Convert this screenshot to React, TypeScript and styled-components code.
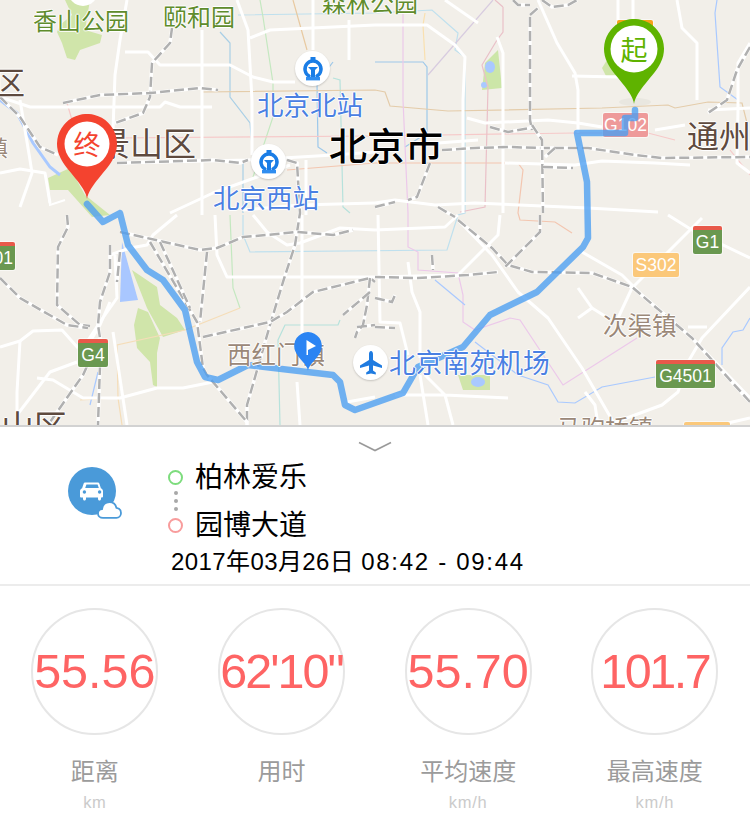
import React from "react";
import styled, { createGlobalStyle } from "styled-components";

const CJK = `"Liberation Sans", "Noto Sans CJK SC", sans-serif`;

const Global = createGlobalStyle`
  html, body { margin: 0; padding: 0; background: #fff; }
  body { width: 750px; height: 825px; overflow: hidden; font-family: ${CJK}; }
`;

const Page = styled.div`
  width: 750px;
  height: 825px;
  display: flex;
  flex-direction: column;
  overflow: hidden;
  background: #fff;
`;

const MapArea = styled.div`
  position: relative;
  width: 750px;
  height: 425px;
  flex: none;
  overflow: hidden;
  background: #f2efe9;
`;

const MapLayer = styled.svg`
  position: absolute;
  left: 0;
  top: 0;
  width: 750px;
  height: 425px;
`;

const kinds = {
  park: { color: "#5f8c2c" },
  district: { color: "#5e4a3e" },
  town: { color: "#9b8878" },
  transit: { color: "#4a80e2" },
  city: { color: "#000" },
} as const;

const Label = styled.span<{ $x: number; $y: number; $size: number; $kind: keyof typeof kinds }>`
  position: absolute;
  left: ${(p) => p.$x}px;
  top: ${(p) => p.$y}px;
  font-size: ${(p) => p.$size}px;
  line-height: 1;
  white-space: nowrap;
  color: ${(p) => kinds[p.$kind].color};
  font-family: "Noto Sans CJK SC", sans-serif;
  font-weight: ${(p) => (p.$kind === "city" ? 500 : 400)};
  text-shadow: 1px 0 0 #fff, -1px 0 0 #fff, 0 1px 0 #fff, 0 -1px 0 #fff;
`;

const Shield = styled.div<{ $x: number; $y: number; $w: number; $h: number; $bg: string; $stripe?: boolean }>`
  position: absolute;
  left: ${(p) => p.$x}px;
  top: ${(p) => p.$y}px;
  width: ${(p) => p.$w}px;
  height: ${(p) => p.$h}px;
  box-sizing: border-box;
  display: flex;
  align-items: center;
  justify-content: ${(p) => (p.$x < 0 ? "flex-end" : "center")};
  padding-right: ${(p) => (p.$x < 0 ? "2px" : "0")};
  background: ${(p) => p.$bg};
  border-top: ${(p) => (p.$stripe ? "4px solid #e8594a" : "none")};
  border-radius: 2px;
  box-shadow: 0 0 0 1px rgba(255, 255, 255, 0.55);
  color: #fff;
  font-family: "Liberation Sans", sans-serif;
  font-size: 17.5px;
  overflow: hidden;
`;

const IconDisc = styled.div<{ $x: number; $y: number }>`
  position: absolute;
  left: ${(p) => p.$x - 17}px;
  top: ${(p) => p.$y - 17}px;
  width: 35px;
  height: 35px;
  border-radius: 50%;
  background: #fff;
  box-shadow: 0 1px 2px rgba(0, 0, 0, 0.18);
  display: flex;
  align-items: center;
  justify-content: center;
`;

const PinBox = styled.div<{ $x: number; $y: number }>`
  position: absolute;
  left: ${(p) => p.$x}px;
  top: ${(p) => p.$y}px;
  width: 60px;
  height: 86px;
`;

const PinChar = styled.span<{ $color: string }>`
  position: absolute;
  left: 0;
  top: 13px;
  width: 60px;
  text-align: center;
  font-family: "Noto Sans CJK SC", sans-serif;
  font-size: 27px;
  line-height: 34px;
  color: ${(p) => p.$color};
`;

const FlagPin = styled.svg`
  position: absolute;
  left: 294px;
  top: 332px;
  width: 28px;
  height: 39px;
`;

const Panel = styled.section`
  flex: 1;
  display: flex;
  flex-direction: column;
  border-top: 2px solid #d2d2d2;
  background: #fff;
`;

const ChevronRow = styled.div`
  height: 33px;
  flex: none;
  display: flex;
  justify-content: center;
  align-items: flex-start;
  padding-top: 14px;
  box-sizing: border-box;
`;

const TripRow = styled.div`
  flex: none;
  display: flex;
  align-items: flex-start;
  padding-left: 68px;
`;

const Avatar = styled.div`
  position: relative;
  flex: none;
  width: 48px;
  height: 48px;
  margin-top: 7px;
  margin-right: 52px;
  border-radius: 50%;
  background: #4a9ad9;
  display: flex;
  align-items: center;
  justify-content: center;
`;

const CloudBadge = styled.svg`
  position: absolute;
  right: -6px;
  bottom: -4px;
  width: 25px;
  height: 18px;
`;

const TripText = styled.div`
  display: flex;
  flex-direction: column;
`;

const PlaceRow = styled.div`
  height: 34px;
  display: flex;
  align-items: center;
  gap: 12px;
`;

const Marker = styled.span<{ $color: string }>`
  width: 15px;
  height: 15px;
  box-sizing: border-box;
  border-radius: 50%;
  border: 2px solid ${(p) => p.$color};
`;

const PlaceName = styled.span`
  font-family: "Noto Sans CJK SC", sans-serif;
  font-size: 28px;
  line-height: 34px;
  margin-top: -4px;
  color: #000;
`;

const Dots = styled.div`
  height: 20px;
  margin: -3px 0;
  width: 15px;
  display: flex;
  flex-direction: column;
  align-items: center;
  justify-content: space-between;
`;

const Dot = styled.i`
  width: 4px;
  height: 4px;
  border-radius: 50%;
  background: #a8a8a8;
`;

const DateLine = styled.div`
  height: 40px;
  line-height: 40px;
  padding-left: 3px;
  font-size: 24px;
  letter-spacing: 0.4px;
  color: #000;
  white-space: nowrap;
  margin-bottom: 2px;
`;

const TimeRange = styled.span`
  letter-spacing: 1.7px;
`;

const Divider = styled.div`
  height: 2px;
  flex: none;
  background: #ececec;
`;

const Stats = styled.div`
  display: grid;
  grid-template-columns: repeat(4, 186.67px);
  padding: 22px 0 0 1.5px;
`;

const Stat = styled.div`
  display: flex;
  flex-direction: column;
  align-items: center;
`;

const Ring = styled.div`
  width: 127px;
  height: 127px;
  box-sizing: border-box;
  border-radius: 50%;
  border: 2px solid #e6e6e6;
  display: flex;
  align-items: center;
  justify-content: center;
`;

const Value = styled.span<{ $track: number }>`
  font-family: "Liberation Sans", sans-serif;
  font-size: 48.5px;
  line-height: 1;
  letter-spacing: ${(p) => p.$track}px;
  color: #fe6464;
  white-space: nowrap;
`;

const StatName = styled.div`
  margin-top: 20px;
  height: 30px;
  line-height: 30px;
  font-family: "Noto Sans CJK SC", sans-serif;
  font-size: 24px;
  color: #9b9b9b;
`;

const Unit = styled.div`
  height: 34px;
  line-height: 34px;
  font-family: "Liberation Sans", sans-serif;
  font-size: 16.5px;
  letter-spacing: 0.7px;
  color: #cbcbcb;
`;

const whiteRoads = [
  "M127,0 L120,40 L115,75 L113,130",
  "M0,97 L30,107 L160,107 L165,102 L180,107 L212,107",
  "M202,30 L202,215",
  "M125,52 L148,52 L160,65 L230,65 L253,77 L273,82 L295,82",
  "M237,0 L248,30 L252,100 L252,155",
  "M250,38 L270,30 L375,25",
  "M313,0 L313,50",
  "M349,20 L349,60",
  "M20,100 L30,160 L32,173 L20,207",
  "M0,173 L20,169 L45,173 L50,203",
  "M117,163 L248,160 L333,155 L375,152",
  "M170,213 L213,193 L290,165",
  "M243,210 L300,205 L375,203",
  "M306,160 L306,215",
  "M375,25 L427,25 L455,45 L465,57 L463,100 L463,213",
  "M445,0 L478,23",
  "M497,37 L503,53 L503,213",
  "M538,0 L557,43 L575,73 L578,90 L578,133",
  "M572,76 L618,77",
  "M467,118 L485,123 L548,120 L578,123 L602,127",
  "M438,143 L478,140",
  "M505,163 L575,165 L602,161 L655,163 L690,165",
  "M375,203 L395,200 L435,205 L475,203 L588,208 L658,212",
  "M618,0 L618,20 M633,0 L633,20",
  "M677,0 L682,28 L697,43 L697,100",
  "M655,130 L685,125",
  "M750,43 L738,63 L738,110 L737,163 L750,173",
  "M708,110 L750,108",
  "M177,215 L153,235 L147,245 L130,248 L110,255",
  "M115,255 L117,298 L100,322 L83,348",
  "M110,302 L100,325 L88,345",
  "M0,347 L20,341 L33,331 L62,330 L78,348",
  "M20,341 L17,392 L17,415",
  "M37,378 L53,380 L83,398 L120,398 L157,388 L183,388 L213,382",
  "M77,362 L50,372 L17,415",
  "M113,332 L127,425",
  "M302,215 L302,342 M297,382 L300,425",
  "M215,215 L217,255 L227,277 L375,277",
  "M253,215 L267,232 L287,245 L300,243 L340,228 L375,230",
  "M375,397 L347,402",
  "M375,230 L445,227 L458,215",
  "M500,215 L498,235 L475,258 L458,275 L375,277",
  "M458,220 L492,255 L518,292 L548,318 L582,368 L615,425",
  "M582,252 L622,275 L642,295 L692,338 L750,398",
  "M750,287 L702,338 L688,362 L678,392 L662,405 L608,425",
  "M668,215 L692,230 L750,258",
  "M702,218 L632,288 L618,318",
  "M578,288 L592,308 L578,318 M592,308 L608,318",
  "M408,262 L412,292 L420,312 L420,358 M420,375 L428,425",
  "M378,215 L380,322 L400,323 L408,355",
  "M395,395 L445,395 L508,398 M425,375 L445,395 L453,425",
  "M585,392 L595,405 L598,425",
  "M688,327 L707,327",
  "M750,418 L728,423",
];

const rails = [
  "M172,28 L170,43 L152,63 L150,97 L143,113 L115,123",
  "M63,103 L100,95 L150,93 L200,88 L218,90",
  "M0,97 L20,117 L40,147 L58,155",
  "M117,163 L213,160 L240,163 L248,160",
  "M287,160 L297,163 L300,213 L295,245 L283,282 L270,325 L247,405 L247,425",
  "M120,232 L200,250 L217,248 L243,237 L267,235 L297,232 L333,235 L353,230",
  "M67,215 L68,227 L58,247 L57,305 L80,325 L90,326",
  "M0,278 L20,298 L67,325 L88,328",
  "M110,245 L110,272 L100,302 L98,325 L100,338 L83,375 L50,422",
  "M100,365 L98,425",
  "M120,252 L117,282",
  "M150,242 L177,288 L197,322 L203,368 L207,375 L247,422",
  "M160,242 L190,308",
  "M207,252 L200,322",
  "M203,337 L270,322 L287,312 L313,292 L370,278 L375,282",
  "M370,278 L367,305 L363,325 L357,332 L355,338 M357,327 L375,325",
  "M370,292 L343,315",
  "M458,220 L492,248 L508,265 L532,272 L592,273 L632,287 L692,338 L750,402",
  "M540,215 L540,232 L505,267",
  "M375,277 L418,278 L468,275 L498,272",
  "M432,255 L433,270",
  "M375,298 L392,302 L395,295",
  "M375,327 L395,328",
  "M530,17 L530,120 L532,130",
  "M513,0 L518,5 L530,5 M530,15 L538,8 M542,0 L552,7 L568,5 L577,0",
  "M490,127 L508,132 L530,128",
  "M442,150 L475,148 L508,147 L542,148 L588,148 L635,155 L662,158 L750,157",
  "M532,125 L542,140 L543,213",
  "M555,148 L545,157",
  "M543,167 L573,168",
  "M430,163 L417,197 L408,200",
  "M375,207 L395,202 M438,207 L455,217",
  "M750,47 L737,70 L727,100 L708,113",
];

const thinLines: [string, string][] = [
  ["#bfe0ee", "M238,15 L375,13 L432,10 L458,33 L455,50 L465,57 L465,213 L458,215 L447,250 L250,252 L243,235 L243,215"],
  ["#9dc8ea", "M375,62 L423,62 L427,67 L427,133 L405,147 M333,62 L317,83 L318,147 L327,153"],
  ["#b6e2dc", "M333,78 L340,80 L343,207 L350,213 M340,320 L338,325 L285,325 L278,340 L280,425"],
  ["#c4e8c0", "M260,0 L263,17 L273,83 L273,117 L253,177 M230,215 L233,288 L240,308"],
  ["#a9cfe6", "M220,32 L230,43 L230,97 L250,123 L253,157 M243,163 L243,213"],
  ["#e8c9a0", "M293,0 L307,50"],
  ["#e4ccaa", "M203,92 L375,90 L385,92 L390,106 L448,111 L602,108 L668,105 L675,108 L708,102 L742,103 L747,123"],
  ["#f6c9c9", "M113,138 L375,136 L575,133 L648,133 L675,140 M67,103 L72,120 M730,150 L750,175"],
  ["#f3c6b0", "M287,170 L375,163 L518,163 L523,170 L518,213 L520,220 L555,222 L572,233"],
  ["#eac0c8", "M503,7 L503,32 L497,40 L482,65 L488,87 L485,207 L460,212 M495,0 L503,7"],
  ["#d8cce0", "M493,0 L428,75"],
  ["#ecc8ea", "M403,13 L403,100 L408,213 L408,247 L418,252 L418,270 L458,273 L463,295 L463,322 L475,330 L510,318 L520,320 L563,385 L637,338"],
  ["#f9e0b0", "M425,13 L423,25 L425,60"],
  ["#f5ddb8", "M80,400 L118,398 L122,425 M118,398 L117,345 L185,330 L240,308"],
  ["#a9c9ff", "M717,0 L715,13 L720,87 L738,100 M435,280 L465,305 M475,342 L518,375 L548,385 L558,402 L575,403 L602,387 L655,377 M750,318 L743,330 L733,332 L722,348 L722,365 M98,372 L90,405"],
];

const parks: [string, string][] = [
  ["#d0e5aa", "57,32 62,43 67,58 75,60 80,50 100,43 102,35 85,30 90,0 65,0 72,15 60,25"],
  ["#d0e5aa", "48,178 70,168 85,195 110,215 92,217 68,190 50,190"],
  ["#d0e5aa", "132,270 157,287 160,305 177,318 185,330 163,337 147,308"],
  ["#d0e5aa", "138,308 148,312 160,338 157,353 157,387 153,385 150,362 137,348 134,325"],
  ["#cce6a8", "485,63 498,50 502,88 482,90"],
  ["#d0e5aa", "602,68 607,60 618,75 606,76"],
  ["#d0e5aa", "458,375 490,375 490,390 463,390"],
  ["#a9c7ff", "122,242 138,300 120,302"],
];

const Chevron = () => (
  <svg width="34" height="11" viewBox="0 0 34 11" fill="none">
    <path d="M1 1.5 L17 9.5 L33 1.5" stroke="#9a9a9a" strokeWidth="1.6" />
  </svg>
);

const StationIcon = () => (
  <svg width="24" height="26" viewBox="0 0 24 26">
    <path
      d="M8 20 A8 8 0 1 1 16 20"
      fill="none"
      stroke="#1a7de6"
      strokeWidth="3.4"
      strokeLinecap="round"
    />
    <path d="M9.5 1 h5 v3.5 h-5z" fill="#1a7de6" />
    <path d="M7 11 h10 l-3 3 v7 h-4 v-7z" fill="#1a7de6" />
    <path d="M5 21 h14 v3.4 H5z" fill="#2f8df0" />
  </svg>
);

const PlaneIcon = () => (
  <svg width="26" height="26" viewBox="4 4 26 26">
    <path
      d="M17 5 c1.3 0 2 1.6 2 3 v6 l9 5.5 v2.5 l-9 -2.6 v5.2 l2.8 2 v2 l-4.8 -1.2 l-4.8 1.2 v-2 l2.8 -2 v-5.2 l-9 2.6 V19.5 l9 -5.5 V8 c0 -1.4 .7 -3 2 -3z"
      fill="#1f7be0"
    />
  </svg>
);

const Pin = ({ x, y, color, inner, ch }: { x: number; y: number; color: string; inner: number; ch: string }) => (
  <PinBox $x={x} $y={y}>
    <svg width="60" height="86" viewBox="0 0 60 86">
      <path d="M30 85 C28.5 72 9 56 3.5 44 A30 30 0 1 1 56.5 44 C51 56 31.5 72 30 85Z" fill={color} />
      <circle cx="30" cy="30" r={inner} fill="#fff" />
    </svg>
    <PinChar $color={color}>{ch}</PinChar>
  </PinBox>
);

const CarIcon = () => (
  <svg width="24" height="20" viewBox="0 0 24 20">
    <path
      d="M6.5 1.5 h11 c1 0 1.7 .5 2 1.4 l1.4 4.3 c1.3 .5 2.1 1.6 2.1 3 v5.3 c0 .5 -.4 .9 -.9 .9 H21 v1.6 c0 .8 -.7 1.5 -1.5 1.5 s-1.5 -.7 -1.5 -1.5 V16.4 H6 v1.6 c0 .8 -.7 1.5 -1.5 1.5 S3 18.8 3 18 V16.4 H.9 c-.5 0 -.9 -.4 -.9 -.9 v-5.3 c0 -1.4 .8 -2.5 2.1 -3 L3.5 2.9 c.3 -.9 1 -1.4 2 -1.4z"
      fill="#fff"
    />
    <path d="M6.4 3.4 h11.2 l1.2 3.7 H5.2z" fill="#4a9ad9" />
    <circle cx="4.4" cy="11" r="1.7" fill="#4a9ad9" />
    <circle cx="19.6" cy="11" r="1.7" fill="#4a9ad9" />
  </svg>
);

const stats = [
  { value: "55.56", name: "距离", unit: "km", track: 0 },
  { value: "62'10\"", name: "用时", unit: "", track: -2 },
  { value: "55.70", name: "平均速度", unit: "km/h", track: 0 },
  { value: "101.7", name: "最高速度", unit: "km/h", track: -2.5 },
];

export default function App() {
  return (
    <Page>
      <Global />
      <MapArea>
        <MapLayer viewBox="0 0 750 425">
          {parks.map(([c, p]) => (
            <polygon key={p} points={p} fill={c} />
          ))}
          <path d="M48,190 L50,205 L65,200" fill="none" stroke="#fff" strokeWidth="2" />
          <ellipse cx="490" cy="67" rx="5" ry="6" fill="#a9c9ff" />
          <ellipse cx="484" cy="85" rx="3" ry="3" fill="#a9c9ff" />
          <ellipse cx="478" cy="382" rx="7" ry="5" fill="#a9c9ff" />
          <path d="M0,100 L17,113 L33,143 L50,167 L60,175" fill="none" stroke="#a9c9ff" strokeWidth="3" />
          <ellipse cx="635" cy="102" rx="16" ry="4" fill="#e9e7e0" />
          {thinLines.map(([c, d]) => (
            <path key={d} d={d} fill="none" stroke={c} strokeWidth="1.2" />
          ))}
          {whiteRoads.map((d) => (
            <path key={d} d={d} fill="none" stroke="#fff" strokeWidth="3" strokeLinejoin="round" />
          ))}
          {rails.map((d) => (
            <g key={d} fill="none">
              <path d={d} stroke="#fff" strokeWidth="3.5" />
              <path d={d} stroke="#b0b0b0" strokeWidth="2.5" strokeDasharray="10 4" />
            </g>
          ))}
          <circle cx="83" cy="-9" r="15" fill="#fff" />
        </MapLayer>

        <Shield $x={617} $y={20} $w={36} $h={24} $bg="#f7a11a" />
        <Shield $x={684} $y={422} $w={46} $h={24} $bg="#fbc87a" />
        <Shield $x={603} $y={113} $w={45} $h={24} $bg="#ee9a9a">G102</Shield>
        <Shield $x={693} $y={226} $w={29} $h={28} $bg="#6a9850" $stripe>G1</Shield>
        <Shield $x={633} $y={253} $w={46} $h={24} $bg="#fbc87a">S302</Shield>
        <Shield $x={656} $y={360} $w={59} $h={28} $bg="#6a9850" $stripe>G4501</Shield>
        <Shield $x={78} $y={339} $w={30} $h={28} $bg="#6a9850" $stripe>G4</Shield>
        <Shield $x={-15} $y={242} $w={30} $h={28} $bg="#6a9850" $stripe>G101</Shield>

        <MapLayer viewBox="0 0 750 425">
          <path
            d="M635,110 L635,118 L625,118 L625,133 L577,133 L587,182 L588,238 L583,247 L537,292 L490,315 L463,347 L418,367 L403,393 L355,410 L345,405 L340,382 L333,375 L248,365 L218,380 L205,377 L197,362 L190,332 L185,310 L163,280 L147,270 L128,245 L120,213 L103,222 L87,204"
            fill="none"
            stroke="#4a9ef2"
            strokeOpacity="0.78"
            strokeWidth="6.5"
            strokeLinejoin="round"
            strokeLinecap="round"
          />
        </MapLayer>

        <Label $kind="park" $size={24} $x={33} $y={8}>香山公园</Label>
        <Label $kind="park" $size={24} $x={163} $y={4}>颐和园</Label>
        <Label $kind="park" $size={24} $x={322} $y={-10}>森林公园</Label>
        <Label $kind="district" $size={31} $x={-6} $y={65}>区</Label>
        <Label $kind="district" $size={33} $x={97} $y={126}>景山区</Label>
        <Label $kind="town" $size={22} $x={-14} $y={135}>镇</Label>
        <Label $kind="district" $size={33} $x={1} $y={409}>山区</Label>
        <Label $kind="district" $size={32} $x={687} $y={118}>通州</Label>
        <Label $kind="transit" $size={26.5} $x={257} $y={91}>北京北站</Label>
        <Label $kind="transit" $size={26.5} $x={213} $y={184}>北京西站</Label>
        <Label $kind="transit" $size={26.8} $x={389} $y={349}>北京南苑机场</Label>
        <Label $kind="city" $size={38} $x={329} $y={125}>北京市</Label>
        <Label $kind="town" $size={24.5} $x={227} $y={342}>西红门镇</Label>
        <Label $kind="town" $size={24.5} $x={603} $y={313}>次渠镇</Label>
        <Label $kind="town" $size={24} $x={557} $y={415}>马驹桥镇</Label>

        <IconDisc $x={312} $y={68}><StationIcon /></IconDisc>
        <IconDisc $x={268} $y={161}><StationIcon /></IconDisc>
        <IconDisc $x={370} $y={362}><PlaneIcon /></IconDisc>

        <FlagPin viewBox="0 0 28 39">
          <path d="M14 38.5 C13 32 3.5 26 1.2 19 A13.8 13.8 0 1 1 26.8 19 C24.5 26 15 32 14 38.5Z" fill="#2b84f3" />
          <path d="M12.5 8 L22 14 L14 18 V23 H12.5Z" fill="#fff" />
        </FlagPin>
        <Pin x={57} y={114} color="#f4432f" inner={22.5} ch="终" />
        <Pin x={604} y={19} color="#5fb300" inner={23.5} ch="起" />
      </MapArea>

      <Panel>
        <ChevronRow>
          <Chevron />
        </ChevronRow>
        <TripRow>
          <Avatar>
            <CarIcon />
            <CloudBadge viewBox="0 0 25 18">
              <path
                d="M6 16.8 C3 16.8 1 14.8 1 12.4 C1 10 2.8 8.4 5 8.2 C5.6 4 8.8 1.2 12.5 1.2 C16 1.2 18.6 3.4 19.4 6.8 C22 7.2 24 9.2 24 12 C24 14.8 22 16.8 19.4 16.8Z"
                fill="#fff"
                stroke="#4a9ad9"
                strokeWidth="1.8"
              />
            </CloudBadge>
          </Avatar>
          <TripText>
            <PlaceRow>
              <Marker $color="#7ddc7d" />
              <PlaceName>柏林爱乐</PlaceName>
            </PlaceRow>
            <Dots>
              <Dot />
              <Dot />
              <Dot />
            </Dots>
            <PlaceRow>
              <Marker $color="#f89c9c" />
              <PlaceName>园博大道</PlaceName>
            </PlaceRow>
            <DateLine>
              2017年03月26日 <TimeRange>08:42 - 09:44</TimeRange>
            </DateLine>
          </TripText>
        </TripRow>
        <Divider />
        <Stats>
          {stats.map((s) => (
            <Stat key={s.name}>
              <Ring>
                <Value $track={s.track}>{s.value}</Value>
              </Ring>
              <StatName>{s.name}</StatName>
              <Unit>{s.unit}</Unit>
            </Stat>
          ))}
        </Stats>
      </Panel>
    </Page>
  );
}
